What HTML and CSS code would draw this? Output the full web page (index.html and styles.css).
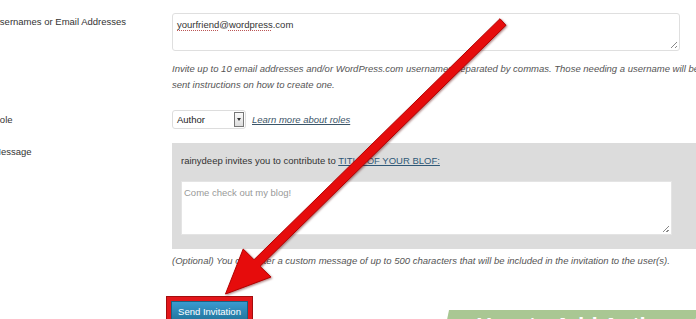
FILE: index.html
```html
<!DOCTYPE html>
<html>
<head>
    <title>Invite New Users</title>
    <link rel="stylesheet" href="styles.css">
</head>
<body>
    <div class="invite-form">
        <div class="row row-users">
            <label class="row-label">Usernames or Email Addresses</label>
            <div class="row-field">
                <div class="text-box users-box">
                    <span class="misspelled">yourfriend</span>@<span class="misspelled">wordpress</span>.com
                </div>
                <p class="description">
                    Invite up to 10 email addresses and/or WordPress.com usernames separated by commas. Those needing a username will be<br>
                    sent instructions on how to create one.
                </p>
            </div>
        </div>

        <div class="row row-role">
            <label class="row-label">Role</label>
            <div class="row-field role-field">
                <div class="select-box">
                    <span>Author</span>
                    <span class="select-arrow"></span>
                </div>
                <a class="roles-link" href="#">Learn more about roles</a>
            </div>
        </div>

        <div class="row row-message">
            <label class="row-label">Message</label>
            <div class="row-field">
                <div class="message-panel">
                    <div class="message-intro">rainydeep invites you to contribute to <a href="#" class="blog-link">TITLE OF YOUR BLOF:</a></div>
                    <div class="text-box message-box">Come check out my blog!</div>
                </div>
                <p class="description">(Optional) You can enter a custom message of up to 500 characters that will be included in the invitation to the user(s).</p>
            </div>
        </div>

        <div class="row row-submit">
            <div></div>
            <div class="row-field">
                <span class="highlight-box">
                    <button class="send-btn">Send Invitation</button>
                </span>
            </div>
        </div>
    </div>

    <!-- annotation arrow drawn over the form -->
    <svg class="annotation" width="696" height="319" viewBox="0 0 696 319">
        <polygon points="500,18.7 506,25.3 260,266.3 271,277 225.5,294 243.2,249 254,259.7" fill="#e60c0c" stroke="#b30000" stroke-width="1"/>
    </svg>

    <div class="title-banner">
        <span class="step-num">1</span>
        <span class="banner-text">How to Add Authors to Wordpress</span>
    </div>
</body>
</html>
```

FILE: styles.css
```css
body {
    margin: 0;
    background: #fff;
    font-family: "Liberation Sans", Arial, sans-serif;
    font-size: 9.5px;
    color: #333;
    overflow: hidden;
    width: 696px;
    height: 319px;
    position: relative;
}
.invite-form {
    margin-left: -7px;
    width: 703px;
    padding-top: 13px;
}
.row {
    display: grid;
    grid-template-columns: 179px 1fr;
}
.row-label {
    display: block;
    line-height: 14px;
    padding-top: 2px;
    white-space: nowrap;
}
.row-field { min-width: 0; }

.text-box {
    position: relative;
    box-sizing: border-box;
    background: #fff;
    border: 1px solid #dfdfdf;
    border-radius: 3px;
    padding: 4px 4px;
    line-height: 14px;
}
.text-box::after {
    content: "";
    position: absolute;
    right: 2px;
    bottom: 2px;
    width: 6px;
    height: 6px;
    background: linear-gradient(135deg, transparent 45%, #888 45%, #888 55%, transparent 55%, transparent 75%, #888 75%, #888 85%, transparent 85%);
}
.users-box {
    width: 508px;
    height: 38px;
}
.misspelled {
    text-decoration: underline dotted #b55;
    text-decoration-thickness: 1px;
    text-underline-offset: 2px;
}
.description {
    margin: 10px 0 0;
    font-style: italic;
    color: #555;
    line-height: 16px;
    white-space: nowrap;
}

.row-role {
    margin-top: 17px;
    align-items: center;
}
.row-role .row-label { padding-top: 0; }
.role-field {
    display: flex;
    align-items: center;
    gap: 6px;
}
.select-box {
    box-sizing: border-box;
    width: 74px;
    height: 19px;
    border: 1px solid #ddd;
    border-radius: 3px;
    display: flex;
    align-items: center;
    justify-content: space-between;
    padding: 0 1px 0 4px;
    color: #222;
}
.select-arrow {
    box-sizing: border-box;
    width: 10px;
    height: 15px;
    border: 1px solid #777;
    background: linear-gradient(#fafafa, #ddd);
    position: relative;
}
.select-arrow::after {
    content: "";
    position: absolute;
    left: 2px;
    top: 5px;
    border-left: 2px solid transparent;
    border-right: 2px solid transparent;
    border-top: 3px solid #333;
}
.roles-link {
    color: #3b5568;
    font-style: italic;
    text-decoration: underline;
}

.row-message { margin-top: 14px; }
.message-panel {
    background: #dcdcdc;
    padding: 11px 24px 14px 9px;
}
.message-intro {
    line-height: 14px;
    color: #333;
}
.blog-link {
    color: #2f5877;
    text-decoration: underline;
}
.message-box {
    margin-top: 13px;
    height: 54px;
    color: #999;
    border-color: #e4e4e4;
    border-radius: 0;
    padding: 4px 2px;
}
.row-message .description {
    margin-top: 5px;
    line-height: 14px;
}

.row-submit { margin-top: 29px; }
.highlight-box {
    display: inline-block;
    margin-left: -5px;
    border: 4px solid #e3161a;
    box-shadow: 0 0 0 1px #a40d0d;
    padding: 0;
    line-height: 0;
}
.send-btn {
    font-family: "Liberation Sans", Arial, sans-serif;
    font-size: 9.5px;
    color: #fff;
    background: linear-gradient(#3a9ad0, #21759b);
    border: 1px solid #1b607f;
    width: 77px;
    height: 21px;
    padding: 0;
    line-height: 19px;
}

.annotation {
    position: absolute;
    left: 0;
    top: 0;
    filter: drop-shadow(1px 1px 1px rgba(90, 0, 0, 0.5));
}

.title-banner {
    position: absolute;
    left: 443px;
    top: 310px;
    width: 260px;
    height: 30px;
    background: #a9c793;
    clip-path: polygon(6px 0, 100% 0, 100% 100%, 0 100%);
    display: flex;
    align-items: flex-start;
    gap: 10px;
    padding-left: 16px;
    white-space: nowrap;
}
.step-num {
    margin-top: 6px;
    font-size: 13px;
    font-weight: bold;
    color: #eef4e8;
    line-height: 16px;
}
.banner-text {
    margin-top: 5px;
    font-size: 22px;
    font-weight: bold;
    color: #fff;
    line-height: 22px;
}
```
